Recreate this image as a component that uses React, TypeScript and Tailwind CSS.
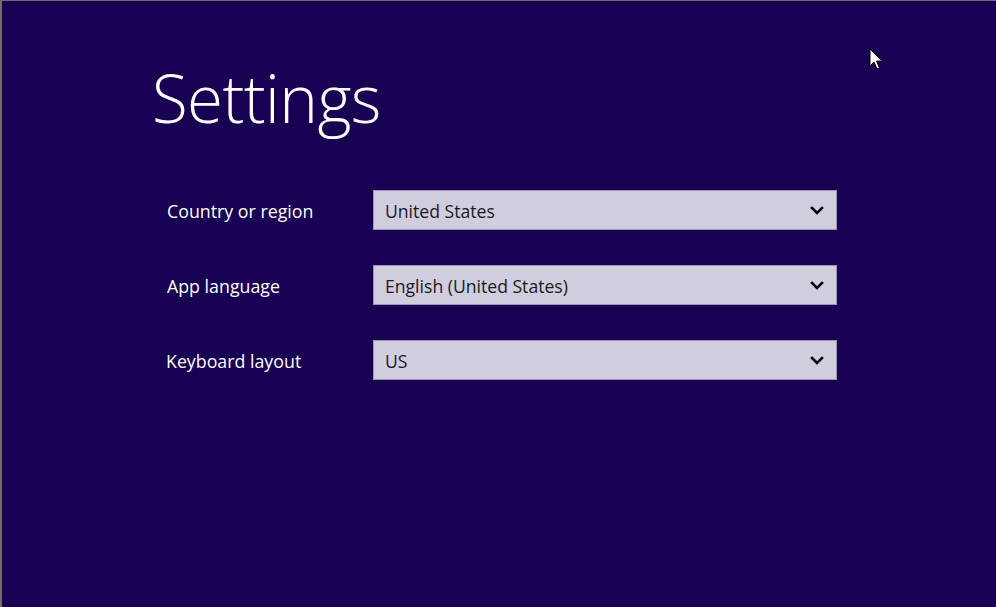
import React from "react";

const Chevron = () => (
  <svg width="14" height="9" viewBox="0 0 14 9" className="shrink-0">
    <path d="M2 2 L7 7 L12 2" fill="none" stroke="#000" strokeWidth="2.6" strokeLinecap="square" />
  </svg>
);

const rows = [
  { label: "Country or region", value: "United States", pl: "pl-[15px]" },
  { label: "App language", value: "English (United States)", pl: "pl-[15px]" },
  { label: "Keyboard layout", value: "US", pl: "pl-[14px]" },
];

export default function App() {
  return (
    <div
      className="relative w-[996px] h-[607px] overflow-hidden bg-[#180052] border-t border-l-2 border-t-[#6e6e6e] border-l-[#6e6e6e]"
      style={{ fontFamily: '"Open Sans", "Noto Sans", sans-serif' }}
    >
      <div className="pl-[150px] pt-[52px]">
        <h1 className="text-[65.5px] leading-[90px] font-light text-white tracking-[-0.6px]">Settings</h1>
        <div className="mt-[47px] flex flex-col gap-[35px]">
          {rows.map((r) => (
            <div key={r.label} className="flex items-center">
              <div className={`w-[221px] ${r.pl} pt-[2px] text-[17.8px] text-white`}>{r.label}</div>
              <div className="w-[464px] h-[40px] bg-[#d0cddf] border border-[#9c93bb] flex items-center justify-between pl-[11px] pr-[12px]">
                <span className="text-[17.6px] text-[#1a1a1a] pt-[2px]">{r.value}</span>
                <Chevron />
              </div>
            </div>
          ))}
        </div>
      </div>
      <svg className="absolute left-[867px] top-[47px]" width="14" height="24" viewBox="0 0 14 24">
        <path d="M1 1 L1 18 L5 14 L8 21 L10.5 20 L7.5 13 L13 13 Z" fill="#fff" stroke="#000" strokeWidth="1" />
      </svg>
    </div>
  );
}
